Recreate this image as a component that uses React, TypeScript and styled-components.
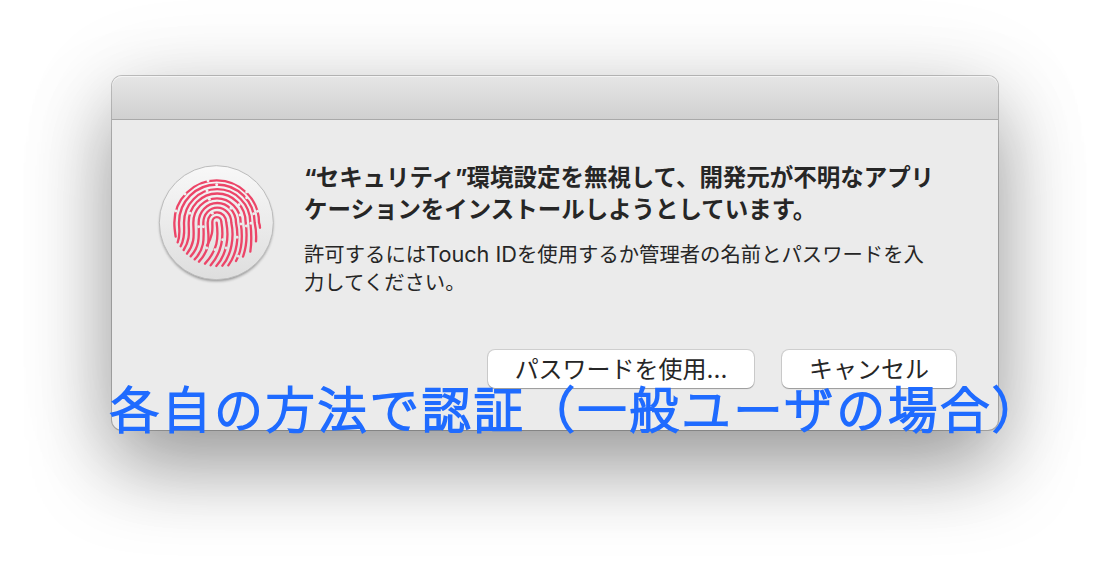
import React from "react";
import styled, { createGlobalStyle } from "styled-components";

const GlobalStyle = createGlobalStyle`
  * { box-sizing: border-box; }
  body {
    margin: 0;
    background: #fff;
    overflow: hidden;
    font-family: Inter, "Noto Sans CJK JP", sans-serif;
    color: #262626;
  }
`;

const Stage = styled.main`
  position: relative;
  width: 1110px;
  height: 578px;
  padding: 76px 112px 0;
`;

const Dialog = styled.section`
  width: 886px;
  height: 354px;
  border-radius: 10px;
  background: #ebebeb;
  display: flex;
  flex-direction: column;
  box-shadow:
    0 0 0 1px rgba(0, 0, 0, 0.22),
    0 38px 80px rgba(0, 0, 0, 0.34),
    0 12px 100px rgba(0, 0, 0, 0.12);
`;

const TitleBar = styled.header`
  height: 44px;
  flex: none;
  border-radius: 10px 10px 0 0;
  background: linear-gradient(#e6e6e6, #d0d0d0);
  border-bottom: 1px solid #a9a9a9;
  box-shadow: inset 0 1px 0 #f4f4f4;
`;

const Content = styled.div`
  display: flex;
  padding: 40px 0 0 42px;
  height: 230px;
`;

const Badge = styled.svg`
  flex: none;
  width: 134px;
  height: 134px;
  margin: -5px 20px 0 -4px;
`;

const Message = styled.div`
  white-space: nowrap;
`;

const Heading = styled.h1`
  margin: 0;
  padding-top: 2px;
  font-size: 23.48px;
  line-height: 32px;
  font-weight: 700;
`;

const Quote = styled.span`
  letter-spacing: -1px;
`;

const Description = styled.p`
  margin: 15px 0 0;
  font-size: 20.35px;
  line-height: 28px;
`;

const Latin = styled.span`
  font-size: 21.7px;
  line-height: 0;
`;

const Actions = styled.footer`
  display: flex;
  justify-content: flex-end;
  gap: 28px;
  padding-right: 42px;
`;

const Button = styled.button<{ $width: number }>`
  width: ${(p) => p.$width}px;
  height: 38px;
  padding: 0;
  border: 0;
  border-radius: 7px;
  background: #fff;
  box-shadow: 0 0 0 1px rgba(0, 0, 0, 0.12), 0 1px 1px rgba(0, 0, 0, 0.25);
  font: 400 24px/37px Inter, "Noto Sans CJK JP", sans-serif;
  color: #262626;
  white-space: nowrap;
`;

const Caption = styled.div`
  position: absolute;
  left: 110px;
  top: 369px;
  font: 300 49px/76px "Noto Sans CJK JP", sans-serif;
  letter-spacing: 2.95px;
  color: #1f6bff;
  -webkit-text-stroke: 2.2px #1f6bff;
  white-space: nowrap;
`;

const ridges = [
  "M77 245C74 225 73 215 73 203A127 127 0 0 1 327 203Q330 211 330 218",
  "M83 262C92 238 87 225 87 203A113 114 0 0 1 314 203C319 225 319 244 318 259",
  "M92 274C107 245 102 225 102 203A98 99 0 0 1 301 203C305 238 305 264 301 290",
  "M101 285C122 252 116 230 116 203A84 86 0 0 1 287 203C292 240 290 275 279 305",
  "M111 296C138 260 130 235 130 203A70 72 0 0 1 272 203C278 240 279 280 258 318",
  "M122 304C152 272 146 240 146 203A55 58 0 0 1 258 203C267 245 262 295 235 331",
  "M134 313C169 278 160 238 160 203A41 44 0 0 1 244 203C253 245 245 300 217 332",
  "M147 320C188 276 173 240 173 203A27 30 0 0 1 229 203C238 250 229 300 199 333",
  "M171 272C191 235 187 222 187 201A13 14 0 0 1 214 201C222 245 217 290 182 331",
  "M200 203C206 250 203 285 165 326",
];

const gaps = [
  [174, 77], [105, 117], [78, 168], [290, 111], [323, 169],
  [200, 89], [311, 176], [171, 107], [290, 128], [178, 133],
  [267, 149], [243, 160], [120, 175], [187, 175],
  [146, 215], [160, 215], [261, 247], [273, 207], [289, 213],
  [303, 205], [228, 279], [218, 254], [265, 304],
  [170, 279], [195, 284], [270, 180],
];

const TouchIdBadge = () => (
  <Badge viewBox="0 0 402 402" aria-label="Touch ID">
    <defs>
      <linearGradient id="disc" x1="0" y1="0" x2="0" y2="1">
        <stop offset="0" stopColor="#f8f8f8" />
        <stop offset="1" stopColor="#dedede" />
      </linearGradient>
      <filter id="soft" x="-10%" y="-10%" width="120%" height="120%">
        <feGaussianBlur stdDeviation="5" />
      </filter>
      <mask id="breaks" maskUnits="userSpaceOnUse" x="0" y="0" width="402" height="402">
        <rect width="402" height="402" fill="#fff" />
        {gaps.map(([x, y]) => (
          <circle key={`${x}-${y}`} cx={x} cy={y} r="4.4" fill="#000" />
        ))}
      </mask>
    </defs>
    <circle cx="199" cy="209" r="169" fill="#000" opacity="0.42" filter="url(#soft)" />
    <circle cx="199" cy="203" r="171" fill="url(#disc)" stroke="#bcbcbc" strokeWidth="3" />
    <g mask="url(#breaks)" fill="none" stroke="#ec4568" strokeWidth="7" strokeLinecap="round">
      {ridges.map((d) => (
        <path key={d} d={d} />
      ))}
    </g>
  </Badge>
);

export default function App() {
  return (
    <>
      <GlobalStyle />
      <Stage>
        <Dialog role="dialog">
          <TitleBar />
          <Content>
            <TouchIdBadge />
            <Message>
              <Heading>
                <Quote>“</Quote>セキュリティ<Quote>”</Quote>環境設定を無視して、開発元が不明なアプリ
                <br />
                ケーションをインストールしようとしています。
              </Heading>
              <Description>
                許可するには<Latin>Touch ID</Latin>を使用するか管理者の名前とパスワードを入
                <br />
                力してください。
              </Description>
            </Message>
          </Content>
          <Actions>
            <Button $width={266}>パスワードを使用...</Button>
            <Button $width={174}>キャンセル</Button>
          </Actions>
        </Dialog>
        <Caption>各自の方法で認証（一般ユーザの場合）</Caption>
      </Stage>
    </>
  );
}
